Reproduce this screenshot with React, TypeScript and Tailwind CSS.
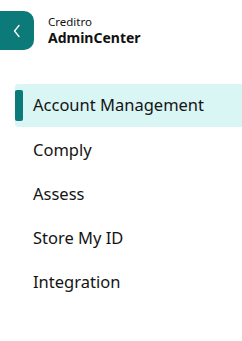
import React from "react";

const items = ["Account Management", "Comply", "Assess", "Store My ID", "Integration"];

export default function App() {
  return (
    <div className="w-[242px] h-[341px] bg-white" style={{ fontFamily: "'Noto Sans', sans-serif" }}>
      <div className="flex items-center gap-[14px] pt-[11px]">
        <button className="w-[34px] h-[39px] bg-[#0b7a78] rounded-r-[10px] flex items-center justify-center">
          <svg width="12" height="16" viewBox="0 0 12 16" fill="none">
            <path d="M8 2.5 L3.5 8 L8 13.5" stroke="white" strokeWidth="1.3" strokeLinecap="round" strokeLinejoin="round" />
          </svg>
        </button>
        <div className="flex flex-col text-[#111]">
          <span className="text-[11.5px] leading-[14px]">Creditro</span>
          <span className="text-[14px] leading-[17px] font-bold">AdminCenter</span>
        </div>
      </div>
      <nav className="mt-[34px] pl-[15px] flex flex-col">
        {items.map((it, i) =>
          i === 0 ? (
            <div key={it} className="h-[43px] mb-[1px] bg-[#d9f6f4] rounded-l-[3px] flex items-center">
              <div className="w-[8px] h-[31px] bg-[#0b7a78] rounded-[2px]" />
              <span className="ml-[10px] text-[16.5px] text-[#141414]">{it}</span>
            </div>
          ) : (
            <div key={it} className="h-[44px] flex items-center pl-[18px] text-[16.5px] text-[#141414]">
              {it}
            </div>
          )
        )}
      </nav>
    </div>
  );
}
